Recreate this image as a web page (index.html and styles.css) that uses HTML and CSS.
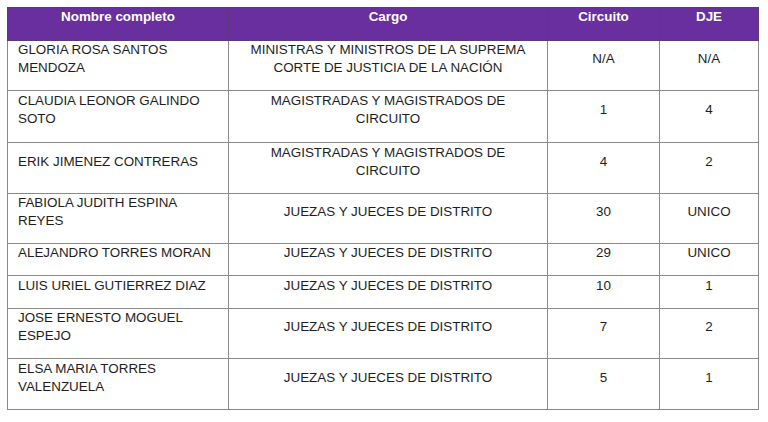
FILE: index.html
```html
<!DOCTYPE html>
<html lang="es">
<head>
<meta charset="utf-8">
<link rel="stylesheet" href="styles.css">
</head>
<body>
<table class="grid">
  <colgroup>
    <col class="c-name"><col class="c-cargo"><col class="c-circ"><col class="c-dje">
  </colgroup>
  <thead>
    <tr><th>Nombre completo</th><th>Cargo</th><th>Circuito</th><th>DJE</th></tr>
  </thead>
  <tbody>
    <tr class="h49"><td class="name">GLORIA ROSA SANTOS MENDOZA</td><td>MINISTRAS Y MINISTROS DE LA SUPREMA CORTE DE JUSTICIA DE LA NACIÓN</td><td>N/A</td><td>N/A</td></tr>
    <tr class="h52"><td class="name">CLAUDIA LEONOR GALINDO SOTO</td><td>MAGISTRADAS Y MAGISTRADOS DE CIRCUITO</td><td>1</td><td>4</td></tr>
    <tr class="h51"><td class="name">ERIK JIMENEZ CONTRERAS</td><td>MAGISTRADAS Y MAGISTRADOS DE CIRCUITO</td><td>4</td><td>2</td></tr>
    <tr class="h50"><td class="name">FABIOLA JUDITH ESPINA REYES</td><td>JUEZAS Y JUECES DE DISTRITO</td><td>30</td><td>UNICO</td></tr>
    <tr class="h32"><td class="name">ALEJANDRO TORRES MORAN</td><td>JUEZAS Y JUECES DE DISTRITO</td><td>29</td><td>UNICO</td></tr>
    <tr class="h33"><td class="name">LUIS URIEL GUTIERREZ DIAZ</td><td>JUEZAS Y JUECES DE DISTRITO</td><td>10</td><td>1</td></tr>
    <tr class="h50"><td class="name">JOSE ERNESTO MOGUEL ESPEJO</td><td>JUEZAS Y JUECES DE DISTRITO</td><td>7</td><td>2</td></tr>
    <tr class="h51"><td class="name">ELSA MARIA TORRES VALENZUELA</td><td>JUEZAS Y JUECES DE DISTRITO</td><td>5</td><td>1</td></tr>
  </tbody>
</table>
</body>
</html>
```
FILE: styles.css
```css
html, body {
  margin: 0;
  padding: 0;
  background: #ffffff;
}
body {
  font-family: "Liberation Sans", Arial, sans-serif;
  font-size: 13.4px;
  line-height: 18px;
  color: #1e1e1e;
}
.grid {
  border-collapse: collapse;
  table-layout: fixed;
  width: 751px;
  margin: 7px 0 0 7px;
}
.c-name { width: 221px; }
.c-cargo { width: 319px; }
.c-circ { width: 112px; }
.c-dje { width: 99px; }
.grid th, .grid td {
  border: 1px solid #8a8a8a;
  padding: 0 10px 13px;
  text-align: center;
  vertical-align: middle;
}
.grid th {
  background: #6a2f9e;
  color: #ffffff;
  font-weight: bold;
  height: 18px;
  padding-top: 0;
  padding-bottom: 14px;
  border-color: #5a3a78;
}
.grid td.name {
  text-align: left;
}
.h49 td { height: 35px; }
.h52 td { height: 38px; }
.h51 td { height: 37px; }
.h50 td { height: 36px; }
.h32 td { height: 18px; }
.h33 td { height: 19px; }
```
